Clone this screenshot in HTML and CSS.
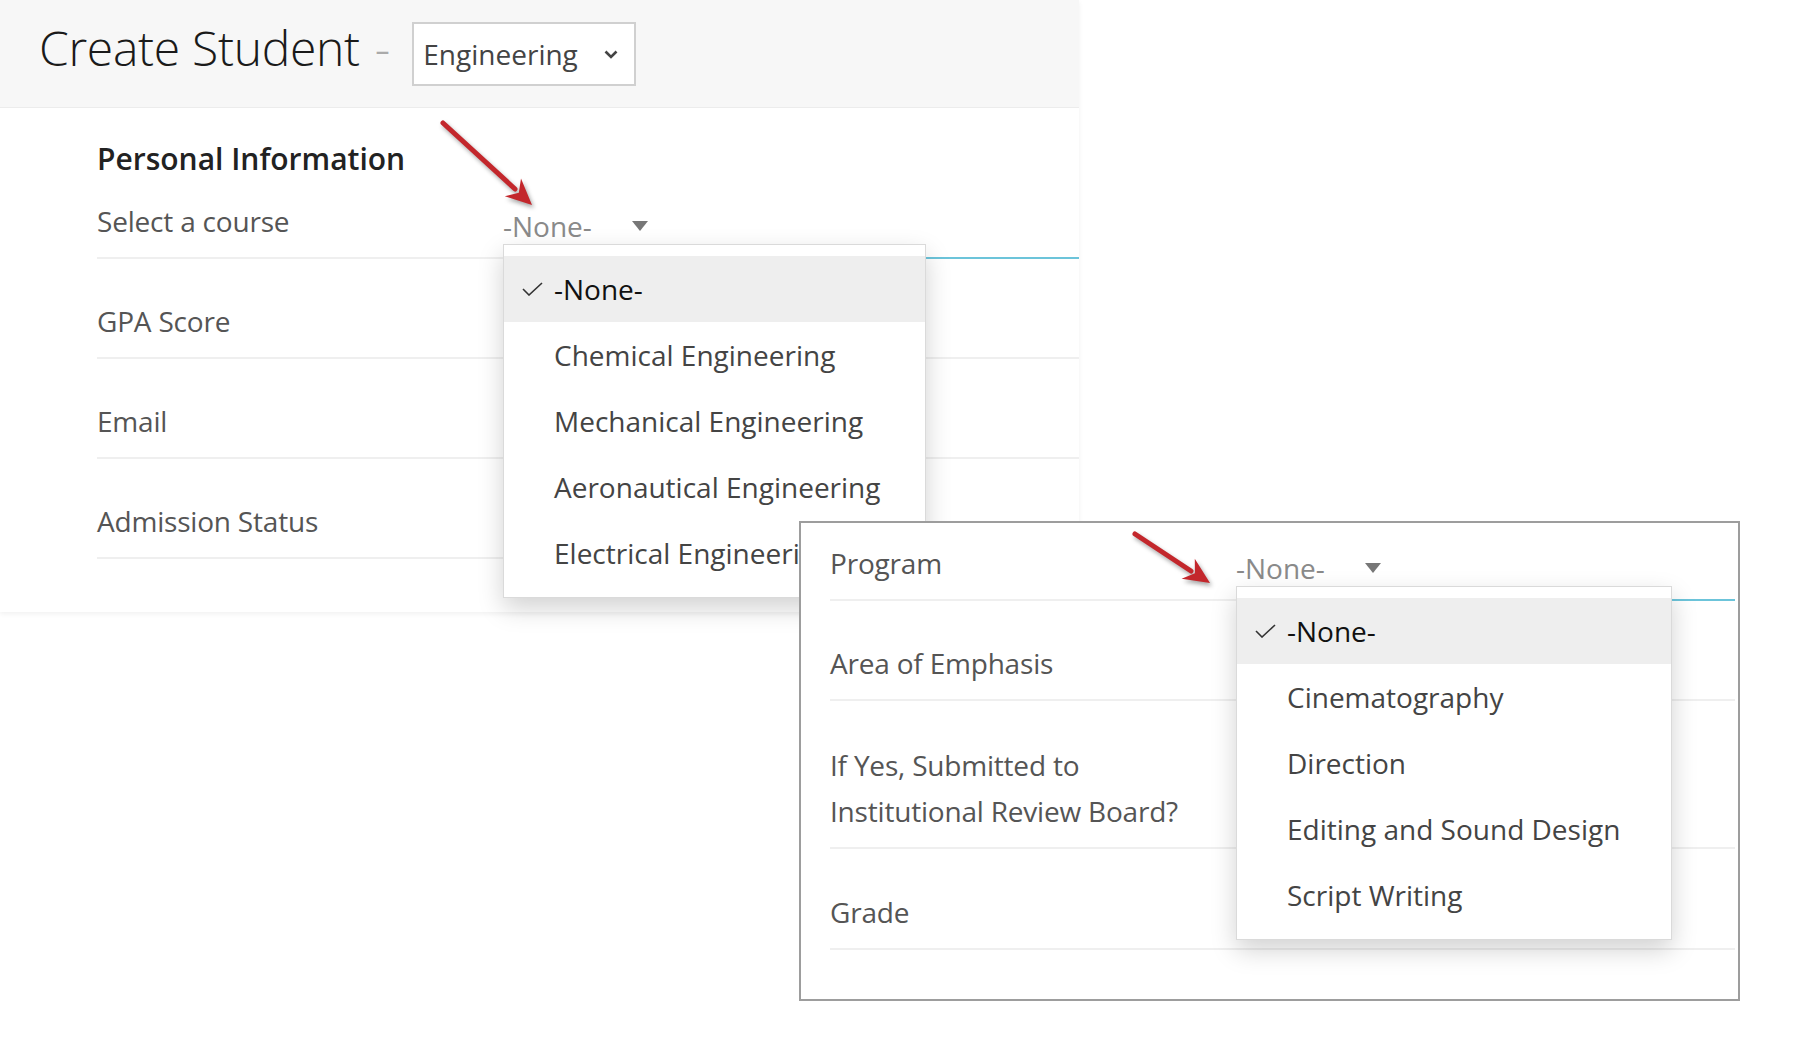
FILE: index.html
```html
<!DOCTYPE html>
<html lang="en">
<head>
<meta charset="UTF-8">
<meta name="viewport" content="width=device-width, initial-scale=1.0">
<title>Create Student</title>
<link rel="stylesheet" href="styles.css">
</head>
<body>

<div class="canvas">

  <!-- main form -->
  <section class="card card-main">
    <header class="card-head">
      <h1 class="title">Create Student</h1>
      <span class="dash">-</span>
      <div class="select-box">
        <span>Engineering</span>
        <svg class="chevron" width="14" height="9" viewBox="0 0 14 9"><polyline points="1.5,1.5 7,7 12.5,1.5" fill="none" stroke="#444" stroke-width="2.6"/></svg>
      </div>
    </header>

    <div class="form">
      <h2 class="section-title">Personal Information</h2>

      <div class="row row-first">
        <div class="label">Select a course</div>
        <div class="value focused">
          <div class="field"><span class="placeholder">-None-</span><span class="caret"></span></div>
          <ul class="menu menu-course">
            <li class="selected"><svg class="tick" width="21" height="14" viewBox="0 0 21 14"><polyline points="1,7 7,13 20,1" fill="none" stroke="#333" stroke-width="1.6"/></svg>-None-</li>
            <li>Chemical Engineering</li>
            <li>Mechanical Engineering</li>
            <li>Aeronautical Engineering</li>
            <li>Electrical Engineering</li>
          </ul>
        </div>
      </div>
      <div class="row">
        <div class="label">GPA Score</div>
        <div class="value"></div>
      </div>
      <div class="row">
        <div class="label">Email</div>
        <div class="value"></div>
      </div>
      <div class="row">
        <div class="label">Admission Status</div>
        <div class="value"></div>
      </div>
    </div>
  </section>

  <!-- second form, laid over the first -->
  <section class="card card-sub">
    <div class="row row-program">
      <div class="label">Program</div>
      <div class="value focused">
        <div class="field"><span class="placeholder">-None-</span><span class="caret"></span></div>
        <ul class="menu menu-program">
          <li class="selected"><svg class="tick" width="21" height="14" viewBox="0 0 21 14"><polyline points="1,7 7,13 20,1" fill="none" stroke="#333" stroke-width="1.6"/></svg>-None-</li>
          <li>Cinematography</li>
          <li>Direction</li>
          <li>Editing and Sound Design</li>
          <li>Script Writing</li>
        </ul>
      </div>
    </div>
    <div class="row">
      <div class="label">Area of Emphasis</div>
      <div class="value"></div>
    </div>
    <div class="row row-tall">
      <div class="label label-wrap">If Yes, Submitted to<br>Institutional Review Board?</div>
      <div class="value"></div>
    </div>
    <div class="row row-last">
      <div class="label">Grade</div>
      <div class="value"></div>
    </div>
  </section>

  <!-- red pointers -->
  <svg class="pointer pointer-course" width="110" height="100" viewBox="0 0 110 100">
    <line x1="8" y1="8" x2="80" y2="74" stroke="#c3272c" stroke-width="5" stroke-linecap="round"/>
    <polygon points="97,90 69.8,81.2 83.8,77.8 86,63.6" fill="#c3272c"/>
  </svg>
  <svg class="pointer pointer-program" width="95" height="70" viewBox="0 0 95 70">
    <line x1="8" y1="8" x2="64" y2="45" stroke="#c3272c" stroke-width="5" stroke-linecap="round"/>
    <polygon points="83,57 54.6,52.8 67.9,47.2 67.8,32.8" fill="#c3272c"/>
  </svg>

</div>

</body>
</html>
```

FILE: styles.css
```css
body { margin: 0; background: #fff; font-family: "Open Sans", "Liberation Sans", Arial, sans-serif; color: #555; }
.canvas { position: relative; width: 1800px; height: 1063px; overflow: hidden; }

/* cards */
.card { background: #fff; box-sizing: border-box; }
.card-main { position: relative; z-index: 1; width: 1079px; padding-bottom: 53px; box-shadow: 0 2px 5px rgba(0,0,0,0.06); }
.card-sub {
  position: absolute;
  left: 799px;
  top: 521px;
  width: 941px;
  height: 480px;
  border: 2px solid #9d9d9d;
  padding: 0 3px 0 29px;
  z-index: 2;
}

/* header */
.card-head { display: flex; align-items: flex-start; height: 107px; padding-left: 39px; background: #f7f7f7; border-bottom: 1px solid #ececec; }
.title { margin: 18px 15px 0 0; font-size: 48px; line-height: 60px; font-weight: 300; color: #1a1a1a; letter-spacing: -0.3px; }
.dash { margin-top: 18px; font-size: 48px; line-height: 60px; font-weight: 300; color: #aaa; }
.select-box {
  display: flex;
  align-items: center;
  justify-content: space-between;
  box-sizing: border-box;
  width: 224px;
  height: 64px;
  margin: 22px 0 0 22px;
  padding: 0 16px 0 9px;
  border: 2px solid #d0d0d0;
  background: #fff;
  font-size: 28px;
  color: #444;
}

/* rows */
.form { padding-left: 97px; }
.section-title { margin: 33px 0 0; font-size: 30px; line-height: 36px; font-weight: 600; color: #222; }
.row { display: grid; grid-template-columns: 406px 1fr; height: 100px; }
.row-first { height: 82px; }
.row-program { height: 78px; }
.row-tall { height: 148px; }
.row-last { height: 101px; }
.label, .value { display: flex; flex-direction: column; justify-content: flex-end; box-sizing: border-box; border-bottom: 2px solid #efefef; }
.label { padding-bottom: 19px; font-size: 28px; line-height: 34px; color: #555; letter-spacing: -0.2px; }
.label-wrap { padding-bottom: 13px; line-height: 46px; }
.value { position: relative; padding-bottom: 14px; }
.value.focused { border-bottom-color: #6cc4da; }

.field { display: flex; align-items: center; height: 34px; font-size: 28px; line-height: 34px; }
.placeholder { width: 129px; color: #8a8a8a; }
.caret { width: 0; height: 0; border-left: 8px solid transparent; border-right: 8px solid transparent; border-top: 10px solid #777; }

/* open dropdowns */
.menu {
  position: absolute;
  left: 0;
  top: calc(100% - 13px);
  margin: 0;
  padding: 11px 0;
  list-style: none;
  background: #fff;
  border: 1px solid #dadada;
  box-shadow: 0 10px 24px rgba(0,0,0,0.18);
  z-index: 3;
}
.menu-course { width: 423px; box-sizing: border-box; }
.menu-program { width: 436px; box-sizing: border-box; }
.menu li { position: relative; height: 66px; padding-left: 50px; font-size: 28px; line-height: 66px; color: #444; white-space: nowrap; }
.menu li.selected { background: #eee; color: #111; }
.tick { position: absolute; left: 18px; top: 26px; }

/* annotation arrows */
.pointer { position: absolute; z-index: 5; filter: drop-shadow(2px 3px 2px rgba(0,0,0,0.35)); }
.pointer-course { left: 435px; top: 115px; }
.pointer-program { left: 1127px; top: 526px; }
```
